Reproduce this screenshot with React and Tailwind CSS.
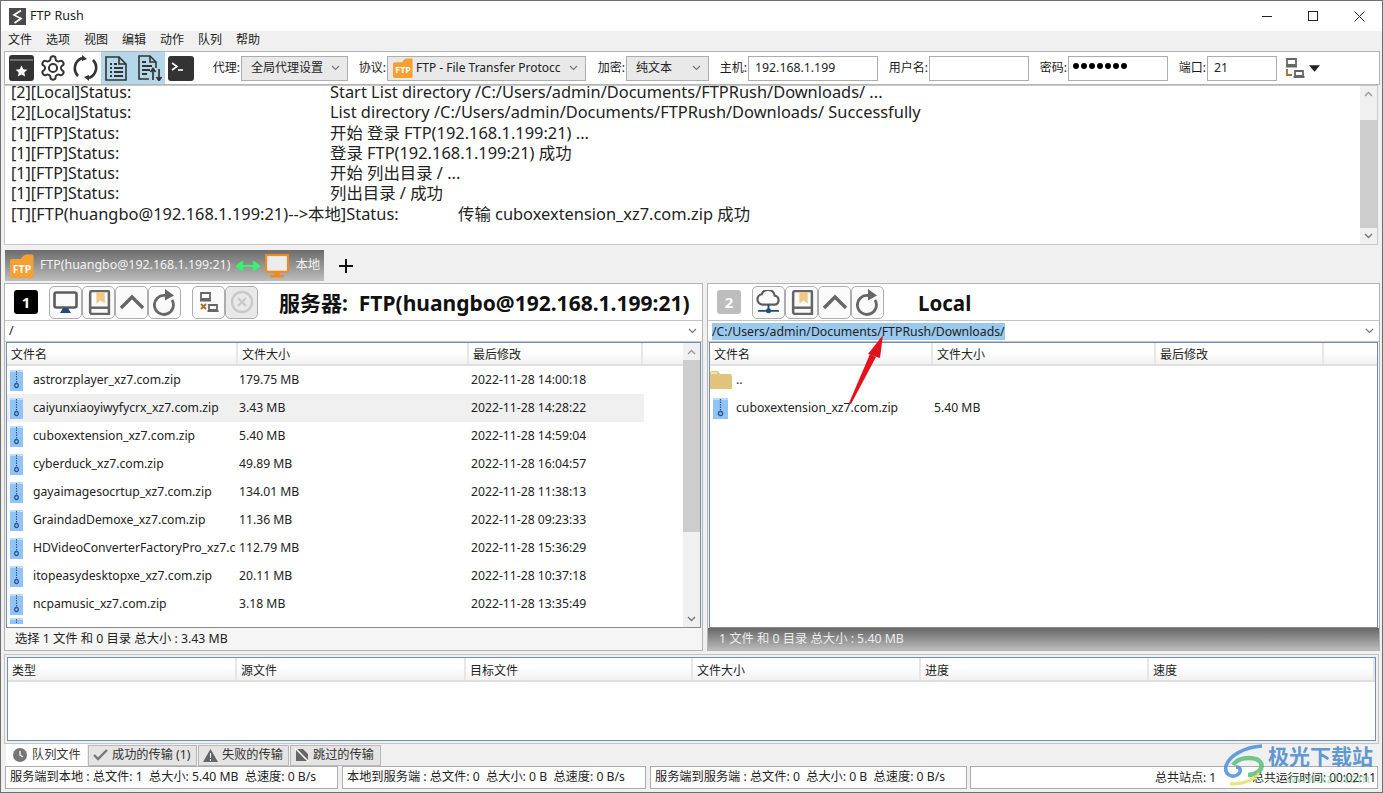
import React from "react";

const FONT = "font-['Noto_Sans','Noto_Sans_CJK_SC',sans-serif]";

const Chevron = ({ className = "" }) => (
  <svg width="9" height="6" viewBox="0 0 9 6" className={className}><path d="M1 1l3.5 3.5L8 1" fill="none" stroke="#777" strokeWidth="1.2" /></svg>
);

const ZipIcon = ({ w = 13 }) => (
  <svg width={w} height="21" viewBox="0 0 14 21" preserveAspectRatio="none" className="shrink-0">
    <rect x="0" y="0" width="14" height="21" fill="#90c4f7" />
    <rect x="0" y="0" width="14" height="2" fill="#bcdcfb" />
    <path d="M7 1v12" stroke="#33559b" strokeWidth="1.2" strokeDasharray="1.5 1" />
    <circle cx="7" cy="15.5" r="2" fill="none" stroke="#33559b" strokeWidth="1.3" />
  </svg>
);

const FolderIcon = () => (
  <svg width="22" height="18" viewBox="0 0 22 18" className="shrink-0">
    <path d="M0 2a2 2 0 012-2h6l2 3h10a2 2 0 012 2v13H0z" fill="#e3c27b" />
    <path d="M1 2h6" stroke="#fff" strokeWidth="1" />
  </svg>
);

const FtpIcon = ({ size = 24 }) => (
  <svg width={size} height={size} viewBox="0 0 24 24" className="shrink-0">
    <path d="M13 2l3-1.5h6a1.5 1.5 0 011.5 1.5v20a2 2 0 01-2 2H2a2 2 0 01-2-2V7a2 2 0 012-2h9z" fill="#f7a032" />
    <text x="12" y="18.5" textAnchor="middle" fontSize="10.5" fontWeight="700" fill="#fff" fontFamily="Noto Sans">FTP</text>
  </svg>
);

const BookStar = () => (
  <svg width="25" height="26" viewBox="0 0 25 26" className="shrink-0">
    <rect x="0" y="0" width="25" height="26" rx="3" fill="#333" />
    <path d="M1 5h23" stroke="#aaa" strokeWidth="1" />
    <path d="M12.5 10.5l1.8 3.7 4 .5-3 2.8.8 4-3.6-2-3.600 2 .8-4-3-2.800 4-.5z" fill="#fff" />
  </svg>
);

const Gear = () => (
  <svg width="28" height="28" viewBox="0 0 24 24" fill="none" stroke="#333" strokeWidth="1.7" strokeLinejoin="round" className="shrink-0">
    <path d="M12.22 2h-.44a2 2 0 0 0-2 2v.18a2 2 0 0 1-1 1.73l-.43.25a2 2 0 0 1-2 0l-.15-.08a2 2 0 0 0-2.73.73l-.22.38a2 2 0 0 0 .73 2.73l.15.1a2 2 0 0 1 1 1.72v.51a2 2 0 0 1-1 1.74l-.15.09a2 2 0 0 0-.73 2.73l.22.38a2 2 0 0 0 2.73.73l.15-.08a2 2 0 0 1 2 0l.43.25a2 2 0 0 1 1 1.73V20a2 2 0 0 0 2 2h.44a2 2 0 0 0 2-2v-.18a2 2 0 0 1 1-1.73l.43-.25a2 2 0 0 1 2 0l.15.08a2 2 0 0 0 2.73-.73l.22-.39a2 2 0 0 0-.73-2.73l-.15-.08a2 2 0 0 1-1-1.74v-.5a2 2 0 0 1 1-1.74l.15-.09a2 2 0 0 0 .73-2.73l-.22-.38a2 2 0 0 0-2.73-.73l-.15.08a2 2 0 0 1-2 0l-.43-.25a2 2 0 0 1-1-1.73V4a2 2 0 0 0-2-2z" />
    <circle cx="12" cy="12" r="3.5" />
  </svg>
);

const Cycle = () => (
  <svg width="25" height="26" viewBox="0 0 25 26" fill="none" stroke="#333" strokeWidth="2.6" className="shrink-0">
    <path d="M5 21A11 11 0 0 1 9 3" />
    <path d="M9 0v6l5-2z" fill="#333" stroke="none" />
    <path d="M20 5a11 11 0 0 1-4 18" />
    <path d="M16 26v-6l-5 2z" fill="#333" stroke="none" />
  </svg>
);

const DocLines = () => (
  <svg width="22" height="25" viewBox="0 0 22 25" fill="none" stroke="#333" strokeWidth="1.6">
    <path d="M1 1h13l7 7v16H1z" />
    <path d="M14 1v7h7" />
    <path d="M5 8h2M9 8h3M5 12h2M9 12h9M5 16h2M9 16h9M5 20h2M9 20h9" strokeWidth="1.8" />
  </svg>
);

const DocArrows = () => (
  <svg width="25" height="26" viewBox="0 0 25 26" fill="none" stroke="#333" strokeWidth="1.6">
    <path d="M11 24H1V1h11l6 6v6" />
    <path d="M12 1v6h6" />
    <path d="M4 7h4M4 11h10M4 15h8M4 19h5" strokeWidth="1.8" />
    <path d="M15 25V14M12.5 17l2.5-3.5 2.5 3.5M21 14v11M18.5 22l2.5 3.5 2.5-3.5" strokeWidth="1.7" />
  </svg>
);

const Terminal = () => (
  <svg width="26" height="25" viewBox="0 0 26 25">
    <rect width="26" height="25" rx="3" fill="#333" />
    <path d="M4 7l5 3.5L4 14" fill="none" stroke="#fff" strokeWidth="1.6" />
    <path d="M10 14h5" stroke="#fff" strokeWidth="1.6" />
  </svg>
);

const Net = ({ x = false }) => (
  <svg width="20" height="20" viewBox="0 0 20 20" fill="none">
    <path d="M2 1h9v6H2zM1 8.5h11" stroke="#666" strokeWidth="1.8" />
    <path d="M10 13h8v5h-8zM8.5 19h11" stroke="#666" strokeWidth="1.8" />
    {x ? (
      <path d="M2 12l5 5M7 12l-5 5" stroke="#a5702d" strokeWidth="1.8" />
    ) : (
      <path d="M2 11v6h5" stroke="#a5702d" strokeWidth="1.8" />
    )}
  </svg>
);

const ToolBtn = ({ children, disabled }) => (
  <div className={`w-[33px] h-[33px] rounded-[5px] border border-[#adadad] flex items-center justify-center ${disabled ? "bg-[#e9e9e9]" : "bg-[#fafafa]"}`}>
    {children}
  </div>
);

const Monitor = () => (
  <svg width="25" height="23" viewBox="0 0 25 23" fill="none">
    <rect x="1.500" y="1.500" width="22" height="15" rx="2" stroke="#5c5c5c" strokeWidth="2.600" />
    <path d="M7 22l3-5h5l3 5z" fill="#234a7c" />
  </svg>
);
const Cloud = () => (
  <svg width="25" height="25" viewBox="0 0 24 24" fill="none">
    <path d="M6 14a5 5 0 01-.5-9.900A6.500 6.500 0 0118 5.500 4.300 4.300 0 0118 14z" stroke="#5c5c5c" strokeWidth="2.100" />
    <path d="M12 14v5M2 20h20" stroke="#234a7c" strokeWidth="1.800" />
    <circle cx="12" cy="20" r="2.400" fill="#234a7c" />
  </svg>
);
const Bookmark = () => (
  <svg width="24" height="25" viewBox="0 0 23 24" fill="none">
    <path d="M3 21V3a2 2 0 012-2h15a1 1 0 011 1v21H5a2 2 0 01-2-2z" stroke="#666" strokeWidth="2.400" />
    <path d="M3 17h18" stroke="#666" strokeWidth="2.400" />
    <path d="M9 2h8v11l-4-3-4 3z" fill="#efc988" />
  </svg>
);
const Up = () => (
  <svg width="26" height="16" viewBox="0 0 26 16" fill="none"><path d="M2 14L13 3l11 11" stroke="#666" strokeWidth="3.400" /></svg>
);
const Reload = () => (
  <svg width="24" height="27" viewBox="0 0 24 27" fill="none">
    <path d="M19 11a9.500 9.500 0 11-7-4.500" stroke="#666" strokeWidth="2.800" />
    <path d="M12 0l9 6.500-9 5z" fill="#666" />
  </svg>
);
const Stop = () => (
  <svg width="24" height="24" viewBox="0 0 24 24" fill="none" stroke="#c9c9c9" strokeWidth="2.400">
    <circle cx="12" cy="12" r="10" />
    <path d="M8 8l8 8M16 8l-8 8" />
  </svg>
);

const Label = ({ children, w }) => (
  <span className={`text-[12px] text-[#1a1a1a] text-right shrink-0 ${w}`}>{children}</span>
);

const Combo = ({ w, children }) => (
  <div className={`${w} h-[25px] bg-[#e9e9e9] border border-[#adadad] flex items-center justify-between pr-[7px] text-[12px] text-[#222] shrink-0 overflow-hidden`}>
    {children}
    <Chevron className="shrink-0" />
  </div>
);

const Input = ({ w, children }) => (
  <div className={`${w} h-[25px] bg-white border border-[#adadad] flex items-center pl-[6px] text-[12.3px] text-[#222] shrink-0`}>{children}</div>
);

const VScroll = ({ thumbH, thumbTop, w = "w-[17px]" }) => (
  <div className={`${w} shrink-0 bg-[#f0f0f0] flex flex-col`}>
    <div className="h-[17px] flex items-center justify-center">
      <svg width="9" height="6" viewBox="0 0 9 6"><path d="M1 5l3.500-3.500L8 5" fill="none" stroke="#999" strokeWidth="1.4" /></svg>
    </div>
    <div className="flex-1 flex flex-col">
      <div className={thumbTop} />
      <div className={`${thumbH} bg-[#cdcdcd]`} />
    </div>
    <div className="h-[17px] flex items-center justify-center">
      <svg width="9" height="6" viewBox="0 0 9 6"><path d="M1 1l3.500 3.500L8 1" fill="none" stroke="#777" strokeWidth="1.4" /></svg>
    </div>
  </div>
);

const HeaderRow = ({ cols, h = "h-[23px]", pt = "pt-[2px]" }) => (
  <div className={`${h} flex shrink-0 bg-gradient-to-b from-white from-40% to-[#f1f1f1] border-b-2 border-[#dfdfdf]`}>
    {cols.map(([t, w], i) => (
      <div key={i} className={`${w} shrink-0 border-r-2 border-[#e6e6e6] pl-[4px] ${pt} text-[12px] text-[#222] flex items-center`}>{t}</div>
    ))}
  </div>
);

const files = [
  ["astrorzplayer_xz7.com.zip", "179.75 MB", "2022-11-28 14:00:18"],
  ["caiyunxiaoyiwyfycrx_xz7.com.zip", "3.43 MB", "2022-11-28 14:28:22"],
  ["cuboxextension_xz7.com.zip", "5.40 MB", "2022-11-28 14:59:04"],
  ["cyberduck_xz7.com.zip", "49.89 MB", "2022-11-28 16:04:57"],
  ["gayaimagesocrtup_xz7.com.zip", "134.01 MB", "2022-11-28 11:38:13"],
  ["GraindadDemoxe_xz7.com.zip", "11.36 MB", "2022-11-28 09:23:33"],
  ["HDVideoConverterFactoryPro_xz7.com.zip", "112.79 MB", "2022-11-28 15:36:29"],
  ["itopeasydesktopxe_xz7.com.zip", "20.11 MB", "2022-11-28 10:37:18"],
  ["ncpamusic_xz7.com.zip", "3.18 MB", "2022-11-28 13:35:49"],
];

const Row = ({ icon, name, size, date, selected, nameW = "w-[203px]", iconW = "w-[26px] pl-[3px]", sizeW = "w-[235px] pl-[3px]" }) => (
  <div className={`h-[28px] shrink-0 flex items-center text-[12.2px] text-[#222] w-[637px] ${selected ? "bg-[#f0f0f0]" : ""}`}>
    <div className={`${iconW} shrink-0 flex`}>{icon}</div>
    <div className={`${nameW} shrink-0 whitespace-nowrap overflow-hidden`}>{name}</div>
    <div className={`${sizeW} shrink-0`}>{size}</div>
    <div className="shrink-0">{date}</div>
  </div>
);

const logLines = [
  ["[2][Local]Status:", "Start List directory /C:/Users/admin/Documents/FTPRush/Downloads/ ..."],
  ["[2][Local]Status:", "List directory /C:/Users/admin/Documents/FTPRush/Downloads/ Successfully"],
  ["[1][FTP]Status:", "开始 登录 FTP(192.168.1.199:21) ..."],
  ["[1][FTP]Status:", "登录 FTP(192.168.1.199:21) 成功"],
  ["[1][FTP]Status:", "开始 列出目录 / ..."],
  ["[1][FTP]Status:", "列出目录 / 成功"],
];

const TabBtn = ({ icon, children, w }) => (
  <div className={`${w} h-[21px] bg-[#e4e4e4] border border-[#b9b9b9] flex items-center pl-[4px] gap-[4px] text-[12.2px] text-[#333] shrink-0`}>
    {icon}
    <span className="whitespace-nowrap">{children}</span>
  </div>
);

const Seg = ({ w, children, className = "" }) => (
  <div className={`${w} h-[23px] bg-white border border-[#adadad] flex items-center pl-[4px] text-[12.2px] text-[#222] shrink-0 whitespace-nowrap ${className}`}>{children}</div>
);

const Pathbar = ({ children }) => (
  <div className="h-[22px] shrink-0 bg-white border-y border-[#c4c4c4] flex items-center justify-between pl-[4px] pr-[5px] text-[12.3px] text-[#222]">
    {children}
    <Chevron />
  </div>
);

export default function App() {
  return (
    <div className={`${FONT} relative w-[1383px] h-[793px] overflow-hidden bg-[#f0f0f0] border border-[#6f6f6f] flex flex-col`}>
      {/* title bar */}
      <div className="h-[30px] shrink-0 bg-white flex items-center pl-[8px]">
        <svg width="17" height="17" viewBox="0 0 17 17" className="shrink-0"><rect width="17" height="17" fill="#4a4a4a" /><path d="M12 2.500L5 7l7 3.500L5.500 15" fill="none" stroke="#fff" strokeWidth="1.700" /></svg>
        <span className="ml-[4px] text-[12.6px] text-[#222]">FTP Rush</span>
        <div className="ml-auto flex items-center">
          <div className="w-[46px] flex justify-center"><div className="w-[10px] h-px bg-[#222]" /></div>
          <div className="w-[46px] flex justify-center"><div className="w-[10px] h-[10px] border border-[#222]" /></div>
          <div className="w-[46px] flex justify-center">
            <svg width="11" height="11" viewBox="0 0 11 11"><path d="M.5.5l10 10M10.500.5l-10 10" stroke="#222" /></svg>
          </div>
        </div>
      </div>

      {/* menu */}
      <div className="h-[20px] shrink-0 flex items-center pl-[7px] text-[12px] text-[#222] pb-[2px]">
        {["文件", "选项", "视图", "编辑", "动作", "队列", "帮助"].map((m) => (
          <span key={m} className="w-[38px] shrink-0">{m}</span>
        ))}
      </div>

      {/* toolbar */}
      <div className="h-[34px] shrink-0 ml-[3px] mr-[2px] border border-[#b4b4b4] bg-white flex items-center">
        <div className="w-[4px] shrink-0" />
        <BookStar />
        <div className="w-[5px] shrink-0" />
        <Gear />
        <div className="w-[6px] shrink-0" />
        <Cycle />
        <div className="ml-[3px] w-[64px] h-[32px] bg-[#b5d7ea] flex items-center shrink-0">
          <div className="ml-[4px]"><DocLines /></div>
          <div className="ml-[11px]"><DocArrows /></div>
        </div>
        <div className="ml-[3px]"><Terminal /></div>
        <Label w="w-[46px]">代理:</Label>
        <Combo w="w-[107px] ml-px pl-[9px]"><span>全局代理设置</span></Combo>
        <Label w="w-[38px]">协议:</Label>
        <Combo w="w-[199px] ml-px pl-[5px]">
          <span className="flex items-center gap-[3px] whitespace-nowrap overflow-hidden"><FtpIcon size={20} />FTP - File Transfer Protocc</span>
        </Combo>
        <Label w="w-[39px]">加密:</Label>
        <Combo w="w-[83px] ml-px pl-[9px]"><span>纯文本</span></Combo>
        <Label w="w-[38px]">主机:</Label>
        <Input w="w-[130px] ml-px">192.168.1.199</Input>
        <Label w="w-[50px]">用户名:</Label>
        <Input w="w-[100px] ml-px" />
        <Label w="w-[38px]">密码:</Label>
        <Input w="w-[100px] ml-px">
          <div className="flex gap-[2px] -mt-[5px] -ml-[2px]">
            {[0, 1, 2, 3, 4, 5, 6].map((d) => (
              <span key={d} className="w-[6px] h-[6px] rounded-full bg-black" />
            ))}
          </div>
        </Input>
        <Label w="w-[38px]">端口:</Label>
        <Input w="w-[70px] ml-px">21</Input>
        <div className="ml-[8px]"><Net /></div>
        <svg width="11" height="7" viewBox="0 0 12 7" className="ml-[4px]"><path d="M0 0h12L6 7z" fill="#222" /></svg>
      </div>

      {/* log */}
      <div className="h-[160px] shrink-0 ml-[3px] mr-[4px] bg-white border border-[#c8c8c8] flex overflow-hidden">
        <div className="flex-1 pl-[6px] -mt-[4px] text-[16.4px] leading-[20.3px] text-[#222] whitespace-nowrap overflow-hidden">
          {logLines.map(([a, b], i) => (
            <div key={i} className="flex">
              <span className="w-[319px] shrink-0 text-[16px]">{a}</span>
              <span>{b}</span>
            </div>
          ))}
          <div className="flex">
            <span className="w-[447px] shrink-0">[T][FTP(huangbo@192.168.1.199:21)--&gt;本地]Status:</span>
            <span>传输 cuboxextension_xz7.com.zip 成功</span>
          </div>
        </div>
        <VScroll thumbTop="h-[17px]" thumbH="h-[108px]" />
      </div>

      {/* connection tabs */}
      <div className="h-[31px] shrink-0 mt-[5px] ml-[4px] flex items-center">
        <div className="w-[319px] h-[31px] bg-gradient-to-b from-[#6c6c6c] to-[#bdbdbd] flex items-center pl-[5px] text-[12.4px] text-[#f2f2f2] whitespace-nowrap">
          <FtpIcon size={24} />
          <span className="ml-[6px]">FTP(huangbo@192.168.1.199:21)</span>
          <svg width="24" height="10" viewBox="0 0 24 10" className="ml-[6px] shrink-0"><path d="M1 5l5-4v8zM23 5l-5-4v8zM5 5h14" fill="#31f56b" stroke="#31f56b" strokeWidth="2" /></svg>
          <svg width="24" height="24" viewBox="0 0 23 23" className="ml-[5px] shrink-0">
            <rect x="1" y="1" width="21" height="16" fill="#ececec" stroke="#f08a1d" strokeWidth="2" />
            <rect x="9" y="17" width="5" height="3" fill="#f08a1d" />
            <rect x="5" y="20" width="13" height="2.500" fill="#f08a1d" />
          </svg>
          <span className="ml-[6px]">本地</span>
        </div>
        <svg width="16" height="16" viewBox="0 0 16 16" className="ml-[14px]"><path d="M8 1v14M1 8h14" stroke="#111" strokeWidth="2" /></svg>
      </div>

      {/* panels */}
      <div className="h-[368px] shrink-0 mt-[2px] ml-[3px] mr-[2px] flex justify-between">
        {/* left */}
        <div className="w-[699px] flex flex-col border border-[#b4b4b4]">
          <div className="h-[36px] shrink-0 bg-white flex items-center pl-[9px]">
            <div className="w-[24px] h-[24px] rounded-[3px] bg-black text-white text-[15px] font-bold flex items-center justify-center shrink-0">1</div>
            <div className="ml-[11px] flex shrink-0"><ToolBtn><Monitor /></ToolBtn><ToolBtn><Bookmark /></ToolBtn><ToolBtn><Up /></ToolBtn><ToolBtn><Reload /></ToolBtn></div>
            <div className="ml-[11px] flex shrink-0"><ToolBtn><Net x /></ToolBtn><ToolBtn disabled><Stop /></ToolBtn></div>
            <div className="ml-[21px] pt-[3px] text-[21px] font-bold text-[#111] whitespace-nowrap">服务器:&nbsp; FTP(huangbo@192.168.1.199:21)</div>
          </div>
          <Pathbar><span>/</span></Pathbar>
          <div className="flex-1 min-h-0 border border-[#6f8fb8] border-b-[#8a8a8a] mx-px flex bg-white overflow-hidden">
            <div className="flex-1 min-w-0 flex flex-col overflow-hidden">
              <HeaderRow cols={[["文件名", "w-[231px]"], ["文件大小", "w-[231px]"], ["最后修改", "w-[174px]"]]} />
              {files.map((f, i) => (
                <Row key={f[0]} icon={<ZipIcon />} name={f[0]} size={f[1]} date={f[2]} selected={i === 1} />
              ))}
              <div className="h-[6px] shrink-0 flex pl-[3px] overflow-hidden"><ZipIcon /></div>
            </div>
            <VScroll thumbTop="h-0" thumbH="h-[172px]" />
          </div>
          <div className="h-[22px] shrink-0 bg-[#f5f5f5] flex items-center pl-[10px] text-[12.3px] text-[#222]">选择 1 文件 和 0 目录 总大小 : 3.43 MB</div>
        </div>
        {/* right */}
        <div className="w-[673px] flex flex-col border border-[#b4b4b4]">
          <div className="h-[36px] shrink-0 bg-white flex items-center pl-[9px]">
            <div className="w-[24px] h-[24px] rounded-[3px] bg-[#bdbdbd] text-white text-[15px] font-bold flex items-center justify-center shrink-0">2</div>
            <div className="ml-[11px] flex shrink-0"><ToolBtn><Cloud /></ToolBtn><ToolBtn><Bookmark /></ToolBtn><ToolBtn><Up /></ToolBtn><ToolBtn><Reload /></ToolBtn></div>
            <div className="ml-[34px] pt-[3px] text-[20.5px] font-bold text-[#111]">Local</div>
          </div>
          <Pathbar><span className="bg-[#99c9ef] leading-[17px] px-0">/C:/Users/admin/Documents/FTPRush/Downloads/</span></Pathbar>
          <div className="flex-1 min-h-0 border border-[#6f8fb8] border-b-[#8a8a8a] mx-px flex flex-col bg-white overflow-hidden">
            <HeaderRow cols={[["文件名", "w-[223px]"], ["文件大小", "w-[223px]"], ["最后修改", "w-[168px]"]]} />
            <Row iconW="w-[26px] pl-0" nameW="w-[195px]" icon={<FolderIcon />} name=".." />
            <Row iconW="w-[26px] pl-[3px]" nameW="w-[195px]" icon={<ZipIcon w={15} />} name="cuboxextension_xz7.com.zip" size="5.40 MB" />
          </div>
          <div className="h-[22px] shrink-0 bg-gradient-to-b from-[#686868] to-[#bcbcbc] flex items-center pl-[11px] text-[12.3px] text-[#ececec]">1 文件 和 0 目录 总大小 : 5.40 MB</div>
        </div>
      </div>

      {/* queue */}
      <div className="h-[90px] shrink-0 mt-[3px] mx-[3px] border border-[#c4c4c4] p-[2px]">
        <div className="h-full border border-[#6f8fb8] bg-white">
          <HeaderRow h="h-[24px]" pt="pt-[3px]" cols={[["类型", "w-[229px]"], ["源文件", "w-[229px]"], ["目标文件", "w-[227px]"], ["文件大小", "w-[228px]"], ["进度", "w-[228px]"], ["速度", "w-[226px]"]]} />
        </div>
      </div>

      {/* queue tabs */}
      <div className="h-[22px] shrink-0 ml-[5px] flex items-center gap-px text-[12.2px]">
        <div className="w-[81px] h-[22px] bg-white flex items-center pl-[7px] gap-[5px] text-[#333] shrink-0">
          <svg width="14" height="14" viewBox="0 0 14 14"><circle cx="7" cy="7" r="7" fill="#777" /><path d="M7 3v4l3 2" fill="none" stroke="#fff" strokeWidth="1.300" /></svg>
          队列文件
        </div>
        <TabBtn w="w-[109px]" icon={<svg width="15" height="12" viewBox="0 0 15 12"><path d="M1 6l4 4 9-9" fill="none" stroke="#777" strokeWidth="2.400" /></svg>}>成功的传输 (1)</TabBtn>
        <TabBtn w="w-[91px]" icon={<svg width="15" height="13" viewBox="0 0 15 13"><path d="M7.500 0L15 13H0z" fill="#666" /><path d="M7.500 4v5M7.500 10v2" stroke="#fff" /></svg>}>失败的传输</TabBtn>
        <TabBtn w="w-[91px]" icon={<svg width="14" height="14" viewBox="0 0 14 14"><path d="M1 1h7l5 5v7H1z" fill="#666" /><path d="M0 0l14 14" stroke="#fff" strokeWidth="1.500" /></svg>}>跳过的传输</TabBtn>
      </div>

      {/* status */}
      <div className="h-[23px] shrink-0 ml-[4px] flex items-center gap-[4px]">
        <Seg w="w-[333px]">服务端到本地 : 总文件: 1&nbsp; 总大小: 5.40 MB&nbsp; 总速度: 0 B/s</Seg>
        <Seg w="w-[304px]">本地到服务端 : 总文件: 0&nbsp; 总大小: 0 B&nbsp; 总速度: 0 B/s</Seg>
        <Seg w="w-[317px]">服务端到服务端 : 总文件: 0&nbsp; 总大小: 0 B&nbsp; 总速度: 0 B/s</Seg>
        <Seg w="w-[408px] -ml-px justify-end pr-[1px]"><span className="mr-[36px] text-[12px]">总共站点: 1</span><span className="text-[11.8px]">总共运行时间: 00:02:11</span></Seg>
      </div>

      {/* annotation arrow */}
      <svg width="60" height="90" viewBox="0 0 60 90" className="absolute left-[830px] top-[325px]">
        <path d="M18 77l2 1 25-47-6-3z" fill="#e3131b" />
        <path d="M52 9L37 28l12 4z" fill="#e3131b" />
      </svg>

      {/* watermark */}
      <div className="absolute left-[1223px] top-[743px] w-[160px] h-[50px] pointer-events-none">
        <svg width="42" height="42" viewBox="0 0 42 42" fill="none" className="opacity-85">
          <path d="M38 2C20 3 5 12 2 22c-2 8 5 12 11 9 5-3 4-8-1-8" stroke="#4a90d9" strokeWidth="3.600" />
          <path d="M9 21c6-9 24-9 28-2 3 7-6 12-13 12" stroke="#5bbf7a" strokeWidth="4.500" />
          <path d="M6 40c11 0 23-3 29-11" stroke="#e4e26a" strokeWidth="3" />
        </svg>
        <span className="absolute left-[44px] top-[-1px] text-[21px] leading-[26px] font-bold text-[#4d8ccf]/90 whitespace-nowrap">极光下载站</span>
        <span className="absolute left-[62px] top-[26px] text-[13px] leading-[16px] text-[#6fc488]/60 whitespace-nowrap">www.xz7.com</span>
      </div>
    </div>
  );
}
